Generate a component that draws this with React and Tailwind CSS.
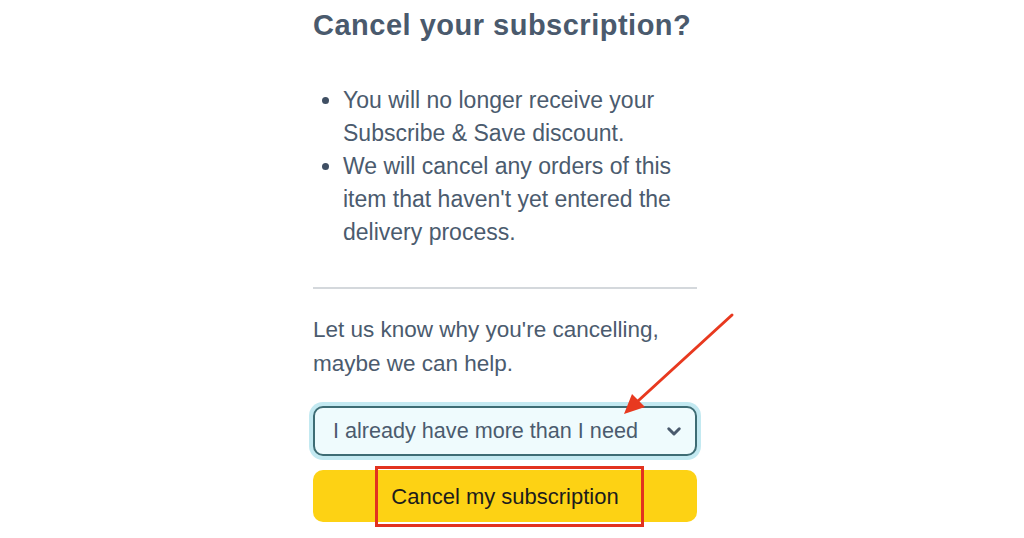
export default function App() {
  return (
    <div className="relative h-[538px] w-[1024px] bg-white font-['Liberation_Sans',Arial,sans-serif] text-[#4b5b6e]">
      <div className="ml-[313px] w-[384px] pt-[9px]">
        <h1 className="text-[29px] font-bold leading-[32px] tracking-[0.5px] text-[#4a5a6d]">
          Cancel your subscription?
        </h1>

        <ul className="mt-[43px] list-disc pl-[30px] text-[23px] leading-[33px] marker:text-[#3f4f63]">
          <li>You will no longer receive your Subscribe &amp; Save discount.</li>
          <li>We will cancel any orders of this item that haven't yet entered the delivery process.</li>
        </ul>

        <div className="mt-[38px] h-[2px] w-full bg-[#d4d8dc]"></div>

        <p className="mt-[24px] text-[22.5px] leading-[34px]">
          Let us know why you're cancelling, maybe we can help.
        </p>

        {/* reason select */}
        <div className="mt-[25px] flex h-[50px] items-center justify-between rounded-[10px] border-2 border-[#3e6c74] bg-[#effbfd] pl-[18px] pr-[12px] shadow-[0_0_0_4px_#c3e9f1]">
          <span className="text-[21.6px] text-[#4b5b6e]">I already have more than I need</span>
          <svg width="18" height="18" viewBox="0 0 24 24" fill="none" stroke="#4a5a6d" strokeWidth="4" strokeLinecap="round" strokeLinejoin="round">
            <path d="M5 9l7 7 7-7" />
          </svg>
        </div>

        <button className="mt-[14px] flex h-[52px] w-full items-center justify-center rounded-[10px] bg-[#fdd214] text-[22px] text-[#1c1c1c]">
          Cancel my subscription
        </button>
      </div>

      {/* annotation: red box */}
      <div className="absolute left-[375px] top-[466px] h-[61px] w-[269px] border-[3px] border-[#e2321f]"></div>

      {/* annotation: arrow */}
      <svg className="absolute left-0 top-0" width="1024" height="538">
        <line x1="732" y1="315" x2="638" y2="401" stroke="#e8391f" strokeWidth="3" strokeLinecap="round" />
        <polygon points="624,414 632,394 645,407" fill="#e8391f" />
      </svg>
    </div>
  );
}
